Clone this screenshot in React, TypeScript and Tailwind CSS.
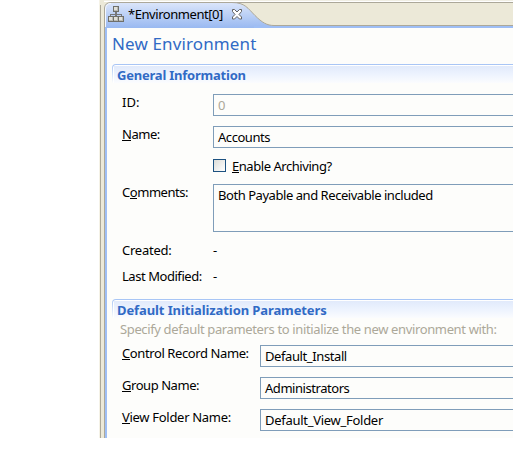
import React from "react";

const T = ({ className = "", children }: { className?: string; children: React.ReactNode }) => (
  <span className={"block whitespace-pre leading-4 " + className}>{children}</span>
);

const Label = ({ k, pre = "", text, className = "" }: { k?: string; pre?: string; text: string; className?: string }) => (
  <label className={"block shrink-0 whitespace-pre leading-4 " + className}>
    {pre}
    {k && <span className="relative">{k}<span className="absolute inset-x-0 bottom-[2px] h-px bg-black" /></span>}
    {text}
  </label>
);

const Field = ({ className = "", children }: { className?: string; children: React.ReactNode }) => (
  <div className={"flex-1 overflow-hidden border border-r-0 border-[#7f9db9] bg-[#fdfdfb] pl-1 pt-[2px] " + className}>{children}</div>
);

const Header = ({ className = "", children }: { className?: string; children: React.ReactNode }) => (
  <div className="ml-[5px] h-[19px] rounded-tl-[4px] bg-gradient-to-b from-[#a6c4f5] to-[#fdfdfb] pl-px pt-px">
    <div className="h-[18px] rounded-tl-[3px] bg-white pl-px pt-px">
      <div className="h-[17px] bg-gradient-to-b from-[#e1eafb] via-[#edf3fe] to-[#fbfcfe] pt-px">
        <h2 className={"ml-[3px] whitespace-pre font-bold leading-4 text-[#316ac5] " + className}>{children}</h2>
      </div>
    </div>
  </div>
);

function NetworkIcon() {
  return (
    <svg width="16" height="17" viewBox="0 0 16 17" shapeRendering="crispEdges">
      <path d="M5 0h6v6H5z" fill="#6f6f6a" />
      <path d="M6 1h4v4H6z" fill="#b9bab4" />
      <path d="M6 1h3v3H6z" fill="#e0e0da" />
      <path d="M7 6h2v2H7zM2 8h12v1H2zM2 9h1v1H2zM7 9h2v1H7zM13 9h1v1h-1z" fill="#77787a" />
      <path d="M0 10h16v6H0z" fill="#6f6f6a" />
      <path d="M1 11h4v4H1zM6 11h4v4H6zM11 11h4v4h-4z" fill="#b9bab4" />
      <path d="M1 11h3v3H1zM6 11h3v3H6zM11 11h3v3h-3z" fill="#e0e0da" />
    </svg>
  );
}

function CloseIcon() {
  return (
    <svg width="12" height="11" viewBox="0 0 12 11">
      <path d="M1.5.5h2l2.5 2.5 2.5-2.5h2v2L8 5.5l2.5 2.5v2h-2L6 7.5 3.5 10h-2V8L4 5.5 1.5 2.5z" fill="#fff" stroke="#636363" />
    </svg>
  );
}

export default function App() {
  return (
    <div className="h-[471px] w-[513px] overflow-hidden bg-white pl-[99px] font-['Noto_Sans','DejaVu_Sans',sans-serif] text-[13px] tracking-[-0.45px] text-black">
      <div className="flex h-[438px] bg-[#ece9d8]">
        <div className="w-[5px] shrink-0 border-l border-[#f5f2e6] pt-[5px]">
          <div className="h-full border-l border-[#aca899]" />
        </div>
        <div className="flex min-w-0 flex-1 flex-col">
          <div className="relative h-7 shrink-0 border-t border-[#f1efe4]">
            <svg className="absolute left-0 -top-px" width="409" height="28">
              <defs>
                <linearGradient id="tab" x1="0" y1="0" x2="0" y2="1">
                  <stop offset="0" stopColor="#dce6fa" />
                  <stop offset="1" stopColor="#99b9f1" />
                </linearGradient>
              </defs>
              <path d="M0 1.5h409" stroke="#fff" />
              <path d="M7 2.5h402" stroke="#aca899" />
              <path d="M.5 28V8Q1 2.5 7 2.5H128c13 0 16 6 23 13s12 10 19 10H409V28z" fill="url(#tab)" />
              <path d="M150 26h259v2H150z" fill="#9ebef5" />
              <path d="M.5 28V8Q1 2.5 7 2.5H128c13 0 16 6 23 13s12 10 19 10H409" fill="none" stroke="#aca899" />
              <path d="M1.5 27V9Q2 3.5 7 3.5" stroke="#f5f8ff" fill="none" />
            </svg>
            <div className="relative flex pl-1">
              <div className="mt-[5px] w-[20px]"><NetworkIcon /></div>
              <T className="mt-[5px] w-[103px]">*Environment[0]</T>
              <div className="mt-2"><CloseIcon /></div>
            </div>
          </div>
          <main className="min-h-0 flex-1 border-l border-[#aca899]">
            <div className="h-full border-l-2 border-[#9ebef5] bg-[#fdfdfb] pt-[5px]">
              <h1 className="ml-[5px] h-[31px] whitespace-pre text-[17px] leading-[22px] tracking-[0.13px] text-[#316ac5]">New Environment</h1>
              <Header className="tracking-[-0.22px]">General Information</Header>
              <div className="mt-[11px] flex h-8">
                <Label text="ID:" className="ml-[15px] w-[91px] tracking-normal" />
                <Field className="h-[22px] text-[#aca899]"><T>0</T></Field>
              </div>
              <div className="flex h-[33px]">
                <Label k="N" text="ame:" className="ml-[15px] w-[91px]" />
                <Field className="h-[22px]"><T>Accounts</T></Field>
              </div>
              <div className="ml-[106px] flex h-[25px]">
                <div className="size-[13px] border border-[#1c5180] bg-gradient-to-br from-[#dcdcd7] to-white" />
                <Label k="E" text="nable Archiving?" className="ml-[6px] -mt-px" />
              </div>
              <div className="flex h-[58px]">
                <Label pre="C" k="o" text="mments:" className="ml-[15px] w-[91px]" />
                <Field className="h-[48px]"><T>Both Payable and Receivable included</T></Field>
              </div>
              <div className="flex h-[26px]">
                <Label text="Created:" className="ml-[15px] w-[91px] tracking-[-0.25px]" /><T>-</T>
              </div>
              <div className="flex h-[31px]">
                <Label text="Last Modified:" className="ml-[15px] w-[91px]" /><T>-</T>
              </div>
              <Header className="tracking-[-0.1px]">Default Initialization Parameters</Header>
              <T className="ml-[13px] mt-[3px] h-6 tracking-[-0.365px] text-[#aca899]">Specify default parameters to initialize the new environment with:</T>
              <div className="flex h-8">
                <Label k="C" text="ontrol Record Name:" className="ml-[15px] w-[138px] tracking-[-0.4px]" />
                <Field className="h-[22px]"><T className="tracking-[-0.4px]">Default_Install</T></Field>
              </div>
              <div className="flex h-8">
                <Label k="G" text="roup Name:" className="ml-[15px] w-[138px]" />
                <Field className="h-[22px]"><T>Administrators</T></Field>
              </div>
              <div className="flex h-[22px]">
                <Label k="V" text="iew Folder Name:" className="ml-[15px] w-[138px] tracking-[-0.3px]" />
                <Field className="h-[22px]"><T className="tracking-[-0.28px]">Default_View_Folder</T></Field>
              </div>
            </div>
          </main>
        </div>
      </div>
    </div>
  );
}
